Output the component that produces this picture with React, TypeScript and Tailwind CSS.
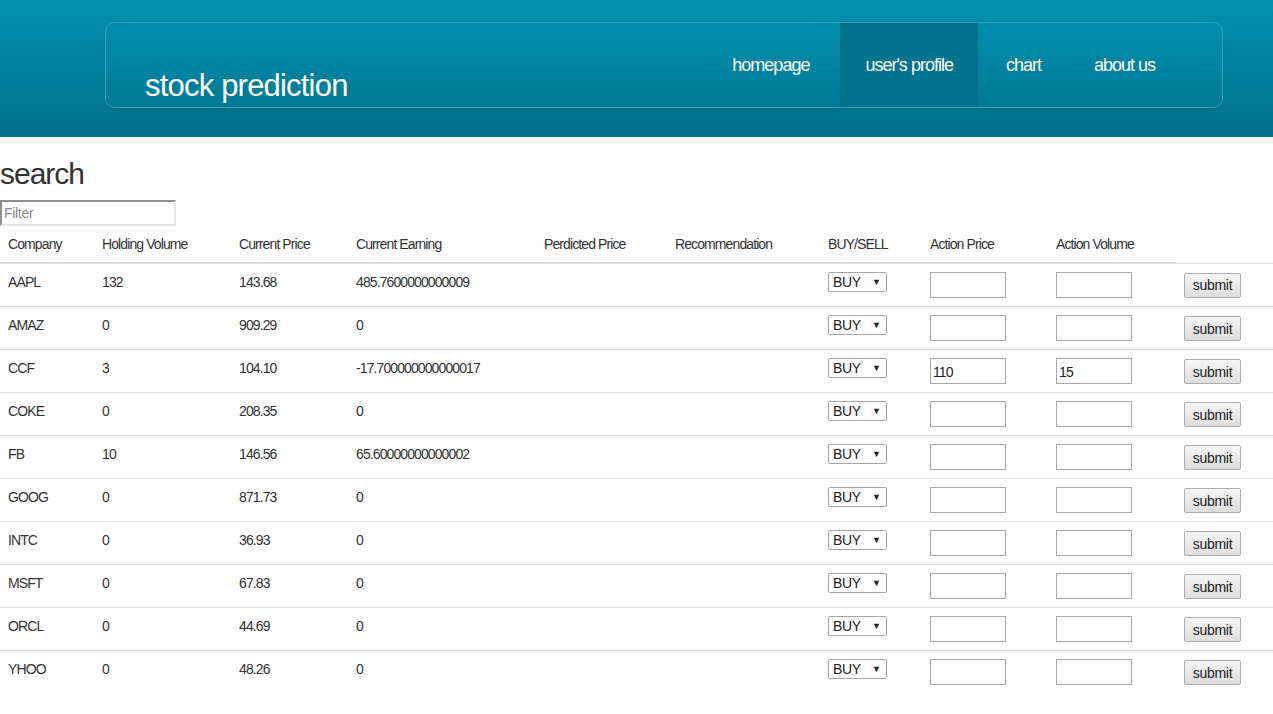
import React from "react";

type Stock = {
  symbol: string;
  holding: string;
  price: string;
  earning: string;
  actionPrice?: string;
  actionVolume?: string;
};

const stocks: Stock[] = [
  { symbol: "AAPL", holding: "132", price: "143.68", earning: "485.7600000000009" },
  { symbol: "AMAZ", holding: "0", price: "909.29", earning: "0" },
  { symbol: "CCF", holding: "3", price: "104.10", earning: "-17.700000000000017", actionPrice: "110", actionVolume: "15" },
  { symbol: "COKE", holding: "0", price: "208.35", earning: "0" },
  { symbol: "FB", holding: "10", price: "146.56", earning: "65.60000000000002" },
  { symbol: "GOOG", holding: "0", price: "871.73", earning: "0" },
  { symbol: "INTC", holding: "0", price: "36.93", earning: "0" },
  { symbol: "MSFT", holding: "0", price: "67.83", earning: "0" },
  { symbol: "ORCL", holding: "0", price: "44.69", earning: "0" },
  { symbol: "YHOO", holding: "0", price: "48.26", earning: "0" },
];

const headers = [
  { label: "Company", w: "w-[94px]" },
  { label: "Holding Volume", w: "w-[137px]" },
  { label: "Current Price", w: "w-[117px]" },
  { label: "Current Earning", w: "w-[188px]" },
  { label: "Perdicted Price", w: "w-[131px]" },
  { label: "Recommendation", w: "w-[153px]" },
  { label: "BUY/SELL", w: "w-[102px]" },
  { label: "Action Price", w: "w-[126px]" },
  { label: "Action Volume", w: "w-[128px]" },
];

function NavLink({ label, active = false, className = "" }: { label: string; active?: boolean; className?: string }) {
  return (
    <div
      className={`flex items-center px-[25px] text-[18px] tracking-[-1px] text-white ${
        active ? "bg-[#00748f] shadow-[inset_0_0_3px_rgba(0,0,0,0.15)]" : ""
      } ${className}`}
    >
      {label}
    </div>
  );
}

function Header() {
  return (
    <header className="h-[137px] bg-gradient-to-b from-[#0091ae] to-[#00718f] pt-[22px]">
      <div className="ml-[105px] flex h-[86px] w-[1118px] justify-between rounded-[9px] border border-[#2aa3bd] bg-gradient-to-b from-[#008fad] to-[#007995] shadow-[0_1px_3px_rgba(0,0,0,0.15)]">
        <div className="flex items-end pb-[11px] pl-[39px] text-[31px] tracking-[-0.8px] text-white">
          stock prediction
        </div>
        <nav className="flex gap-[3px] pr-[42px]">
          <NavLink label="homepage" className="!pr-[28px]" />
          <NavLink label="user's profile" active />
          <NavLink label="chart" />
          <NavLink label="about us" />
        </nav>
      </div>
    </header>
  );
}

function Row({ s }: { s: Stock }) {
  const td = "border-t border-[#dddddd] p-2 align-top";
  return (
    <tr>
      <td className={td}>{s.symbol}</td>
      <td className={td}>{s.holding}</td>
      <td className={td}>{s.price}</td>
      <td className={td}>{s.earning}</td>
      <td className={td}></td>
      <td className={td}></td>
      <td className={td}>
        <div className="flex h-[20px] w-[59px] items-center justify-between rounded-[2px] border border-[#a6a6a6] bg-white pl-[4px] pr-[6px] text-[14px] leading-none text-[#222]">
          <span className="tracking-[-0.4px]">BUY</span>
          <span className="text-[9px] text-[#222]">▼</span>
        </div>
      </td>
      <td className={td}>
        <div className="flex h-[26px] w-[76px] items-center border border-[#a9a9a9] pl-[2px] pt-[2px] text-[14px] text-[#222]">
          {s.actionPrice ?? ""}
        </div>
      </td>
      <td className={td}>
        <div className="flex h-[26px] w-[76px] items-center border border-[#a9a9a9] pl-[2px] pt-[2px] text-[14px] text-[#222]">
          {s.actionVolume ?? ""}
        </div>
      </td>
      <td className={td}>
        <div className="mt-[1px] flex h-[25px] w-[57px] items-center justify-center rounded-[2px] border border-[#adadad] bg-gradient-to-b from-[#f6f6f6] to-[#dedede] text-[14px] tracking-[-0.3px] text-[#222]">
          submit
        </div>
      </td>
    </tr>
  );
}

export default function App() {
  return (
    <div className="min-h-[714px] bg-white font-['Liberation_Sans',Arial,sans-serif] text-[14px] leading-[20px] text-[#333]">
      <Header />
      <h2 className="mt-[20px] mb-[10px] text-[30px] leading-[33px] tracking-[-1px] text-[#333]">search</h2>
      <div className="flex h-[26px] w-[176px] items-center border-2 border-t-[#8e8e8e] border-l-[#8e8e8e] border-r-[#e6e6e6] border-b-[#e6e6e6] pl-[2px] text-[14px] tracking-[-0.3px] text-[#8a8a8a]">
        Filter
      </div>
      <table className="w-full table-fixed border-collapse tracking-[-0.9px]">
        <thead>
          <tr>
            {headers.map((h) => (
              <th
                key={h.label}
                className={`${h.w} border-b-2 border-[#dddddd] p-2 text-left align-bottom font-normal`}
              >
                {h.label}
              </th>
            ))}
          </tr>
        </thead>
        <tbody>
          {stocks.map((s) => (
            <Row key={s.symbol} s={s} />
          ))}
        </tbody>
      </table>
    </div>
  );
}
